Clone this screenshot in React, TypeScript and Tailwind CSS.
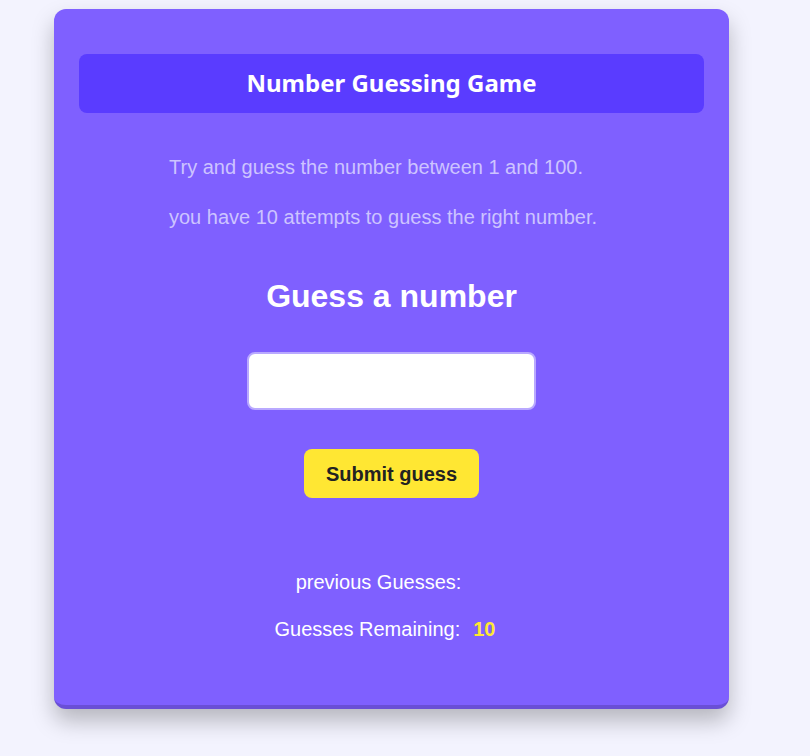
import { useState } from "react";

export default function App() {
  const [guess, setGuess] = useState("");
  const [previous, setPrevious] = useState<number[]>([]);
  const remaining = 10 - previous.length;

  const submit = (e: React.FormEvent) => {
    e.preventDefault();
    const n = parseInt(guess, 10);
    if (!n || n < 1 || n > 100 || remaining <= 0) return;
    setPrevious((p) => [...p, n]);
    setGuess("");
  };

  return (
    <main className="min-h-screen bg-[#f3f3fe] pt-[9px] pl-[54px] font-['Liberation_Sans',Arial,sans-serif]">
      <div className="w-[675px] h-[700px] bg-[#7f60ff] rounded-xl border-b-4 border-[#6a4fd6] shadow-[0_12px_22px_rgba(0,0,0,0.25)] pt-[45px] px-[25px]">
        <div className="h-[59px] bg-[#5a3cff] rounded-lg flex items-center justify-center">
          <h1 className="text-white font-bold text-[24px] leading-[30px] font-['Noto_Sans',sans-serif] -mt-[2px]">Number Guessing Game</h1>
        </div>

        <div className="pl-[90px] text-[20px] leading-[23px] text-[#cdc4ff]">
          <p className="mt-[43px]">Try and guess the number between 1 and 100.</p>
          <p className="mt-[27px]">you have 10 attempts to guess the right number.</p>
        </div>

        <form onSubmit={submit} className="flex flex-col items-center">
          <h2 className="mt-[49px] text-white font-bold text-[32px] leading-[37px]">Guess a number</h2>
          <input
            type="number"
            value={guess}
            onChange={(e) => setGuess(e.target.value)}
            className="mt-[37px] w-[289px] h-[58px] bg-white rounded-lg border-2 border-[#b9a9ff] px-3 text-lg outline-none"
          />
          <button
            type="submit"
            className="mt-[39px] w-[175px] h-[49px] bg-[#ffe733] rounded-lg text-[#222] font-bold text-[20px]"
          >
            Submit guess
          </button>
        </form>

        <div className="text-white text-[20px] leading-[23px] flex flex-col items-center">
          <p className="mt-[73px] flex items-center">
            <span>previous Guesses:</span>
            <span className="mx-[13px]">{previous.join(", ")}</span>
          </p>
          <p className="mt-[24px] flex items-center">
            <span>Guesses Remaining:</span>
            <span className="mx-[13px] text-[#ffe733] font-bold">{remaining}</span>
          </p>
        </div>
      </div>
    </main>
  );
}
